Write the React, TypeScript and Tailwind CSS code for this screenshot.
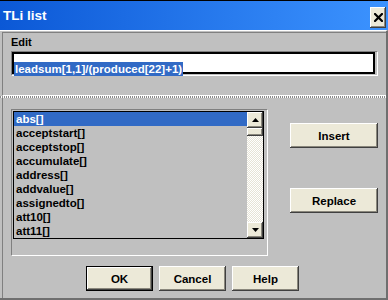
import React from "react";

const raised =
  "bg-[#ece9d8] shadow-[inset_-1px_-1px_#404040,inset_1px_1px_#ffffff,inset_-2px_-2px_#8a877c]";

function Btn({ label, w, def }: { label: string; w: string; def?: boolean }) {
  return (
    <div className={`${w} h-[25px] ${def ? "border border-black" : ""} flex`}>
      <div className={`flex-1 ${raised} flex items-center justify-center text-[11.5px] leading-[14px] text-black`}>
        {label}
      </div>
    </div>
  );
}

const items = [
  "abs[]",
  "acceptstart[]",
  "acceptstop[]",
  "accumulate[]",
  "address[]",
  "addvalue[]",
  "assignedto[]",
  "att10[]",
  "att11[]",
];

export default function App() {
  return (
    <div className="w-[388px] h-[300px] bg-[#c0c0c0] flex flex-col font-['Liberation_Sans',Arial,sans-serif] font-bold overflow-hidden">
      {/* Title bar */}
      <div className="h-[30px] shrink-0 border-t border-black bg-gradient-to-r from-[#0b58d6] to-[#3c93ff] flex items-center justify-between pl-[3px] pr-[2px]">
        <span className="text-white text-[13.5px] leading-[16px] mt-[1px]">TLi list</span>
        <div className={`w-[16px] h-[21px] mt-[3px] ${raised} flex items-center justify-center`}>
          <svg width="9" height="9" viewBox="0 0 9 9">
            <path d="M1 1 L8 8 M8 1 L1 8" stroke="#000" strokeWidth="2.2" strokeLinecap="square" />
          </svg>
        </div>
      </div>

      {/* Body */}
      <div className="flex-1 flex flex-col border-t border-t-white border-r-2 border-r-[#6f6f6f] border-b-2 border-b-[#6f6f6f]">
        {/* Edit panel */}
        <div className="ml-[2px] mt-[1px] h-[64px] shrink-0 border-t border-l border-[#808080] border-b border-b-white flex flex-col">
          <div className="pl-[8px] pt-[3px] text-[11px] leading-[13px] text-black">Edit</div>
          <div className="ml-[8px] mt-[2px] w-[367px] h-[25px] border-t border-l border-[#808080] border-b border-r border-b-white border-r-white">
            <div className="w-[363px] h-[22px] border-2 border-black bg-white pt-[2px]">
              <span className="inline-block bg-[#316ac5] text-white text-[11.5px] leading-[14px] px-[1px]">
                leadsum[1,1]/(produced[22]+1)
              </span>
            </div>
          </div>
        </div>

        {/* dotted separator */}
        <div className="h-[2px] shrink-0 bg-[repeating-linear-gradient(90deg,#8a8a8a_0_1px,#ffffff_1px_2px)]" />

        {/* Lower panel */}
        <div className="flex-1 ml-[2px] border-l border-[#808080] flex flex-col">
          <div className="flex">
            {/* list groupbox */}
            <div className="ml-[8px] mt-[11px] w-[257px] h-[147px] border-t border-l border-[#808080] border-b border-r border-b-white border-r-white">
              <div className="ml-[1px] mt-[1px] w-[251px] h-[128px] border border-black flex">
                <div className="w-[233px] flex flex-col">
                  {items.map((it, i) => (
                    <div
                      key={it}
                      className={`h-[14px] pl-[2px] text-[11.5px] leading-[14px] ${
                        i === 0 ? "bg-[#316ac5] text-white" : "text-black"
                      }`}
                    >
                      {it}
                    </div>
                  ))}
                </div>
                <div className="w-[16px] flex flex-col bg-[conic-gradient(#ffffff_25%,#e6e3d6_0_50%,#ffffff_0_75%,#e6e3d6_0)] bg-[length:2px_2px]">
                  <div className={`h-[16px] ${raised} flex items-center justify-center`}>
                    <svg width="7" height="4" viewBox="0 0 7 4">
                      <path d="M3.5 0 L7 4 L0 4 Z" fill="#000" />
                    </svg>
                  </div>
                  <div className={`h-[8px] ${raised}`} />
                  <div className="flex-1" />
                  <div className={`h-[16px] ${raised} flex items-center justify-center`}>
                    <svg width="7" height="4" viewBox="0 0 7 4">
                      <path d="M0 0 L7 0 L3.5 4 Z" fill="#000" />
                    </svg>
                  </div>
                </div>
              </div>
            </div>
            {/* right buttons */}
            <div className="ml-[22px] flex flex-col">
              <div className="mt-[25px]">
                <Btn label="Insert" w="w-[88px]" />
              </div>
              <div className="mt-[40px]">
                <Btn label="Replace" w="w-[88px]" />
              </div>
            </div>
          </div>

          {/* bottom buttons */}
          <div className="mt-[10px] ml-[83px] flex gap-[6px]">
            <Btn label="OK" w="w-[67px]" def />
            <Btn label="Cancel" w="w-[67px]" />
            <Btn label="Help" w="w-[67px]" />
          </div>
        </div>
      </div>
    </div>
  );
}
